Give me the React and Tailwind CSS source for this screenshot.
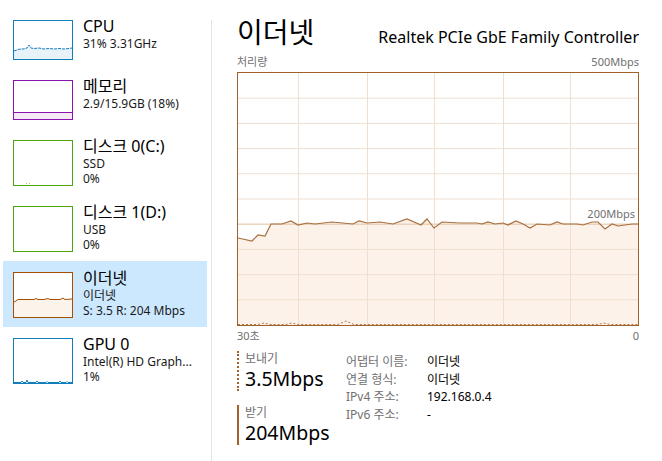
import React from 'react';

const ethLine = [
  [0, 165], [14, 168], [20, 162], [27, 163], [33, 151], [44, 151], [53, 148], [60, 152], [69, 150], [77, 151],
  [94, 149], [115, 151], [121, 148], [129, 150], [142, 149], [155, 151], [169, 146], [183, 152], [189, 146],
  [196, 155], [204, 149], [222, 150], [239, 150], [244, 151], [250, 149], [257, 151], [265, 150], [270, 152],
  [278, 148], [285, 151], [292, 155], [299, 151], [312, 152], [319, 149], [325, 151], [339, 151], [345, 152],
  [354, 149], [360, 149], [367, 156], [374, 151], [380, 153], [387, 152], [394, 151], [400, 151],
];

const sendLine = [
  [0, 251.5], [20, 251.5], [26, 250], [32, 251.5], [48, 251.5], [54, 250], [60, 251.5], [100, 251.5], [108, 248],
  [116, 251.5], [360, 251.5], [366, 250], [372, 251.5], [400, 251.5],
];

const pts = (arr) => arr.map(([x, y]) => `${x},${y}`).join(' ');

function Thumb({ color, h, children }) {
  return (
    <div className="shrink-0 w-[60px] border bg-white" style={{ borderColor: color, height: h }}>
      <svg width="58" height={h - 2} viewBox={`0 0 58 ${h - 2}`} className="block">
        {children}
      </svg>
    </div>
  );
}

function SideItem({ title, lines, color, h, selected, children }) {
  return (
    <div className={`flex gap-[10px] pl-[10px] pt-[7px] pb-[9px] ${selected ? 'bg-[#cce8ff]' : ''}`}>
      <div className="mt-[4px]">
        <Thumb color={color} h={h}>{children}</Thumb>
      </div>
      <div className="whitespace-nowrap">
        <div className="text-[16px] leading-[20px] text-black">{title}</div>
        {lines.map((l) => (
          <div key={l} className="text-[12px] leading-[15px] text-[#1a1a1a]">{l}</div>
        ))}
      </div>
    </div>
  );
}

function Sidebar() {
  return (
    <div className="w-[211px] shrink-0 pt-[9px] pl-[3px] pr-[4px]">
      <SideItem title="CPU" lines={['31% 3.31GHz']} color="#117dbb" h={40}>
        <polygon fill="#e8f2f9" points="0,30 3,29 6,28 10,28 13,27 15,24 17,27 20,27.5 25,27 30,28 35,27.5 40,28 45,27.5 50,28 55,27.5 58,27 58,38 0,38" />
        <polyline fill="none" stroke="#117dbb" strokeWidth="1" strokeDasharray="3 1" points="0,30 3,29 6,28 10,28 13,27 15,24 17,27 20,27.5 25,27 30,28 35,27.5 40,28 45,27.5 50,28 55,27.5 58,27" />
      </SideItem>
      <SideItem title="메모리" lines={['2.9/15.9GB (18%)']} color="#8b12ae" h={40}>
        <rect x="0" y="31" width="58" height="7" fill="#f4e8f7" />
        <line x1="0" y1="31.5" x2="58" y2="31.5" stroke="#8b12ae" strokeWidth="1" />
      </SideItem>
      <SideItem title="디스크 0(C:)" lines={['SSD', '0%']} color="#4da60c" h={46}>
        <rect x="12" y="42" width="1" height="1" fill="#9bcf74" />
        <rect x="15" y="42" width="1" height="1" fill="#9bcf74" />
      </SideItem>
      <SideItem title="디스크 1(D:)" lines={['USB', '0%']} color="#4da60c" h={46} />
      <SideItem title="이더넷" lines={['이더넷', 'S: 3.5 R: 204 Mbps']} color="#a74f01" h={46} selected>
        <polygon fill="#fcf3eb" points="0,29 2,28 4,26.5 20,26.5 22,25.5 24,26.5 30,26.5 34,25.5 36,26.5 46,26.5 49,25 51,26.5 58,26 58,44 0,44" />
        <polyline fill="none" stroke="#a74f01" strokeWidth="1" points="0,29 2,28 4,26.5 20,26.5 22,25.5 24,26.5 30,26.5 34,25.5 36,26.5 46,26.5 49,25 51,26.5 58,26" />
      </SideItem>
      <SideItem title="GPU 0" lines={['Intel(R) HD Graph...', '1%']} color="#117dbb" h={46}>
        <polyline fill="none" stroke="#117dbb" strokeWidth="1" points="0,43.5 7,43.5 8,42 9,43.5 12,43.5 13,41 14,43.5 22,43.5 23,42 24,43.5 32,43.5 33,42.5 34,43.5 45,43.5 46,42 47,43.5 52,43.5 53,42.5 54,43.5 58,43.5" />
      </SideItem>
    </div>
  );
}

function Chart() {
  const hLines = [1, 2, 3, 4, 5, 6, 7, 8, 9].map((k) => k * 25.2);
  const vLines = [60, 129, 196, 265, 332];
  return (
    <div className="relative w-[402px] h-[254px] border border-[#a0602a] bg-white">
      <svg width="400" height="252" viewBox="0 0 400 252" className="block">
        <polygon fill="#fcf2e9" points={`${pts(ethLine)} 400,252 0,252`} />
        {hLines.map((y) => (
          <line key={y} x1="0" y1={y} x2="400" y2={y} stroke="#efdfd0" strokeWidth="1" />
        ))}
        {vLines.map((x) => (
          <line key={x} x1={x + 0.5} y1="0" x2={x + 0.5} y2="252" stroke="#efdfd0" strokeWidth="1" />
        ))}
        <line x1="0" y1="151.2" x2="400" y2="151.2" stroke="#e6cbb3" strokeWidth="1" />
        <polyline fill="none" stroke="#a8703e" strokeWidth="1.2" points={pts(ethLine)} />
        <polyline fill="none" stroke="#b5784a" strokeWidth="1" strokeDasharray="2 2" points={pts(sendLine)} />
      </svg>
      <span className="absolute right-[3px] top-[134px] text-[11px] leading-[14px] text-[#707070]">200Mbps</span>
    </div>
  );
}

function Stat({ label, value, dotted }) {
  return (
    <div className={`border-l-2 border-[#a0602a] pl-[6px] ${dotted ? 'border-dotted' : 'border-solid'}`}>
      <div className="text-[12px] leading-[15px] text-[#707070]">{label}</div>
      <div className="text-[19.5px] leading-[25px] text-black">{value}</div>
    </div>
  );
}

export default function App() {
  const rows = [
    ['어댑터 이름:', '이더넷'],
    ['연결 형식:', '이더넷'],
    ['IPv4 주소:', '192.168.0.4'],
    ['IPv6 주소:', '-'],
  ];
  return (
    <div className="w-[662px] h-[461px] bg-white flex overflow-hidden font-['Noto_Sans','Noto_Sans_CJK_KR',sans-serif]">
      <Sidebar />
      <div className="w-px shrink-0 mt-[20px] bg-[#e3e3e3]" />
      <div className="flex-1 pl-[25px] pt-[8px]">
        <div className="w-[402px] flex justify-between items-end h-[42px]">
          <div className="text-[28px] leading-[36px] text-black">이더넷</div>
          <div className="text-[16px] leading-[22px] text-black pb-[2px]">Realtek PCIe GbE Family Controller</div>
        </div>
        <div className="w-[402px] flex justify-between text-[11px] leading-[14px] text-[#707070] mt-[5px] mb-[3px]">
          <span>처리량</span>
          <span>500Mbps</span>
        </div>
        <Chart />
        <div className="w-[402px] flex justify-between text-[11px] leading-[14px] text-[#707070] mt-[3px]">
          <span>30초</span>
          <span>0</span>
        </div>
        <div className="flex items-start mt-[8px]">
          <div className="w-[109px] shrink-0 flex flex-col gap-[14px]">
            <Stat label="보내기" value="3.5Mbps" dotted />
            <Stat label="받기" value="204Mbps" />
          </div>
          <div className="grid grid-cols-[81px_auto] pt-[2px] text-[12px] leading-[17.5px]">
            {rows.map(([k, v]) => (
              <React.Fragment key={k}>
                <span className="text-[#707070]">{k}</span>
                <span className="text-black">{v}</span>
              </React.Fragment>
            ))}
          </div>
        </div>
      </div>
    </div>
  );
}
